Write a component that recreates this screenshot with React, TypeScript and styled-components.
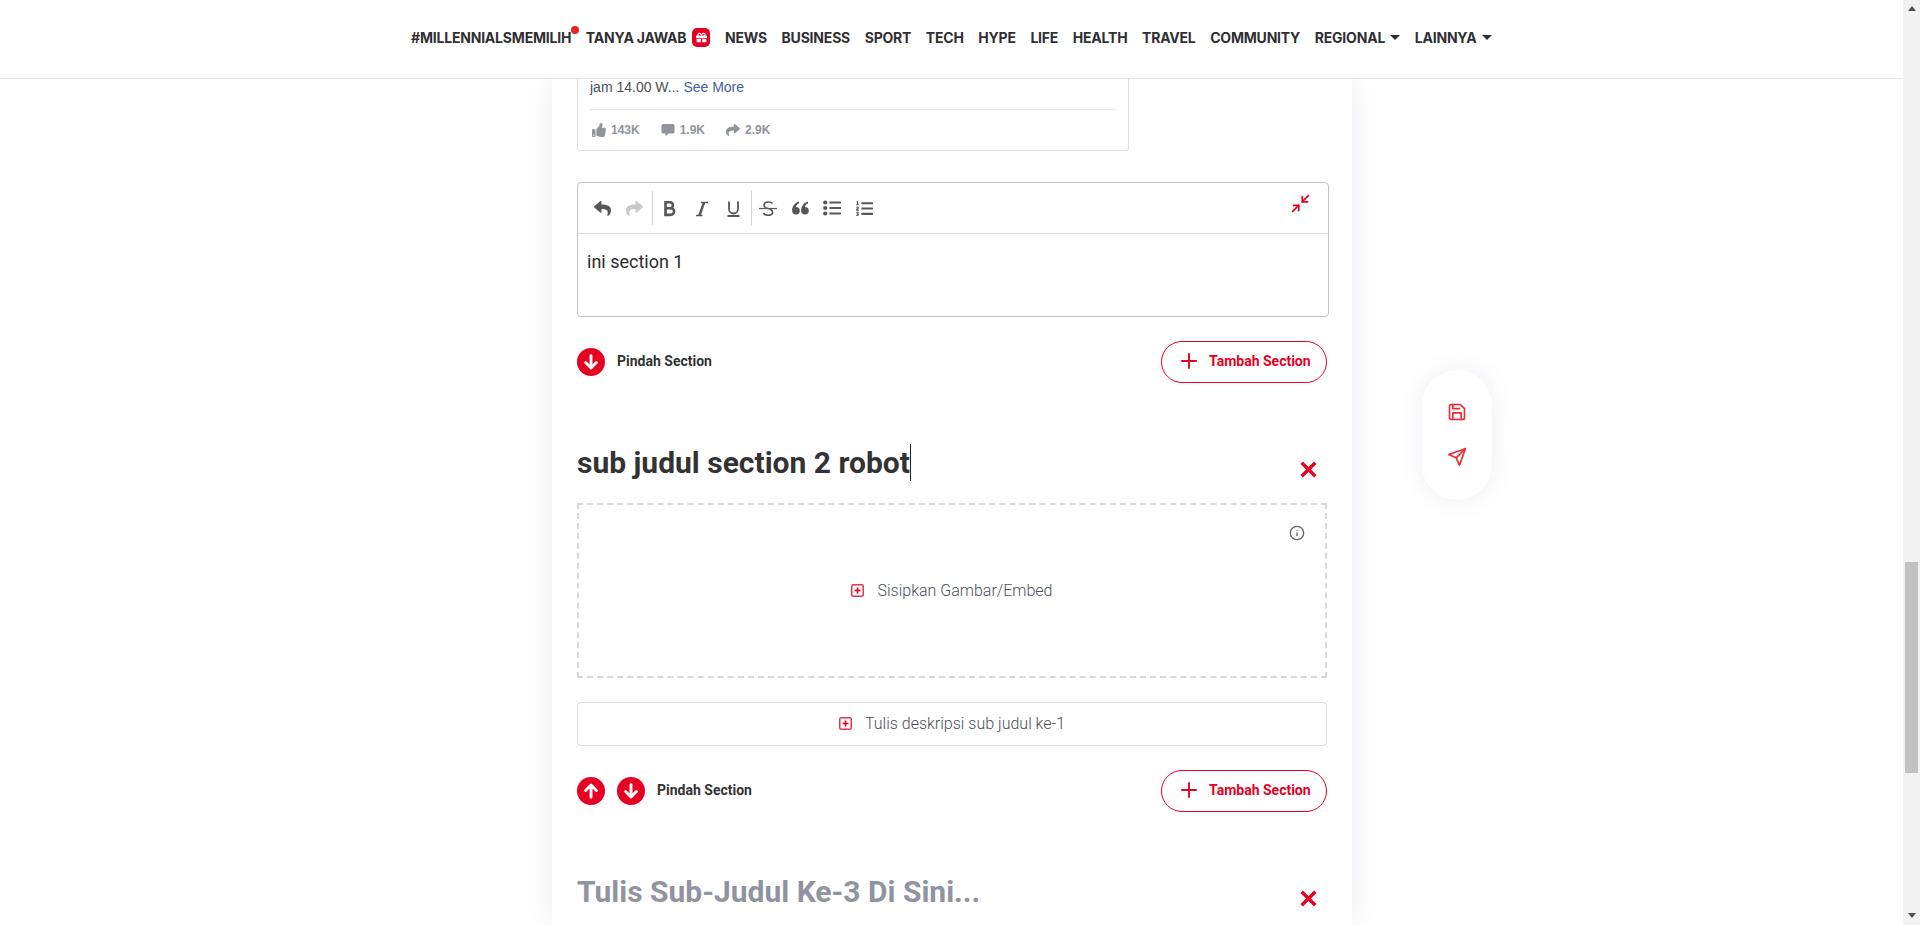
import React from "react";
import styled, { createGlobalStyle } from "styled-components";
import { FaReply, FaShare, FaThumbsUp, FaGift, FaListOl } from "react-icons/fa";
import { FiMinimize2, FiSave, FiSend, FiInfo } from "react-icons/fi";

const RED = "#e60023";

const Global = createGlobalStyle`
  html, body { margin: 0; padding: 0; height: 100%; overflow: hidden; background: #fff; }
  * { box-sizing: border-box; }
  body { font-family: Roboto, "Liberation Sans", sans-serif; color: #333; }
`;

const Shell = styled.div`
  display: flex;
  width: 100%;
  height: 925px;
  overflow: hidden;
`;
const Main = styled.div`
  position: relative;
  flex: 1;
  display: flex;
  flex-direction: column;
  min-width: 0;
`;
const Nav = styled.nav`
  flex: none;
  height: 79px;
  display: flex;
  align-items: center;
  gap: 14.6px;
  padding: 0 0 3px 411px;
  background: #fff;
  border-bottom: 1px solid #e6e6e6;
  position: relative;
  z-index: 2;
`;
const NavLink = styled.span`
  position: relative;
  display: inline-flex;
  align-items: center;
  font-family: Inter, "Liberation Sans", sans-serif;
  font-weight: 700;
  font-size: 14px;
  letter-spacing: -0.2px;
  color: #2f2f33;
  white-space: nowrap;
`;
const Dot = styled.i`
  position: absolute;
  right: -8px;
  top: -3px;
  width: 8px;
  height: 8px;
  border-radius: 50%;
  background: #f02020;
`;
const GiftBadge = styled.span`
  display: inline-flex;
  align-items: center;
  justify-content: center;
  width: 18px;
  height: 19px;
  margin-left: 6px;
  border-radius: 5px;
  background: ${RED};
  color: #fff;
  font-size: 11px;
`;
const Caret = styled.i`
  width: 0;
  height: 0;
  margin-left: 5px;
  border-left: 5px solid transparent;
  border-right: 5px solid transparent;
  border-top: 5px solid #2f2f33;
`;
const Card = styled.main`
  flex: 1;
  width: 800px;
  margin: 0 0 0 552px;
  padding: 0 25px;
  background: #fff;
  box-shadow: 0 0 30px rgba(90, 90, 160, 0.1);
  overflow: hidden;
`;
const Embed = styled.div`
  width: 552px;
  height: 72px;
  padding: 0 12px;
  border: 1px solid #e0e0e0;
  border-top: 0;
  border-radius: 0 0 3px 3px;
  font-family: "Liberation Sans", sans-serif;
`;
const EmbedText = styled.div`
  font-size: 14px;
  line-height: 17px;
  color: #4b4f56;
  height: 31px;
  border-bottom: 1px solid #e9ebee;
  a { color: #3f5f9e; }
`;
const Stats = styled.div`
  display: flex;
  height: 39px;
  align-items: center;
  font-size: 12px;
  font-weight: 700;
  color: #90949c;
`;
const Stat = styled.span`
  display: inline-flex;
  align-items: center;
  gap: 5px;
  margin: 0 19px 0 2px;
  svg { font-size: 14px; }
`;
const Editor = styled.section`
  margin-top: 31px;
  width: 752px;
  height: 135px;
  border: 1px solid #c4c4c4;
  border-radius: 4px;
`;
const Toolbar = styled.div`
  display: flex;
  align-items: center;
  height: 51px;
  padding: 0 17px 0 8px;
  border-bottom: 1px solid #d9d9d9;
`;
const ToolGroup = styled.div<{ $sep?: boolean }>`
  display: flex;
  height: 34px;
  padding-right: ${(p) => (p.$sep ? "2px" : "0")};
  border-right: ${(p) => (p.$sep ? "1px solid #d4d4d4" : "0")};
`;
const ToolButton = styled.span<{ $off?: boolean }>`
  width: 32px;
  display: flex;
  align-items: center;
  justify-content: center;
  font-size: 17px;
  color: ${(p) => (p.$off ? "#c9c9c9" : "#56565c")};
`;
const Compress = styled.span`
  margin-left: auto;
  margin-bottom: 10px;
  display: flex;
  color: ${RED};
  font-size: 21px;
`;
const EditorBody = styled.div`
  padding: 16px 9px;
  font-size: 18px;
  line-height: 24px;
  color: #2b2b2b;
`;
const ActionRow = styled.div`
  margin-top: 24px;
  width: 750px;
  height: 42px;
  display: flex;
  align-items: center;
  gap: 12px;
`;
const RoundArrow = styled.span`
  width: 28px;
  height: 28px;
  border-radius: 50%;
  background: ${RED};
  display: flex;
  align-items: center;
  justify-content: center;
`;
const MoveLabel = styled.span`
  font-size: 14px;
  font-weight: 700;
  color: #333;
  margin-bottom: 3px;
`;
const AddButton = styled.button`
  margin-left: auto;
  width: 166px;
  height: 42px;
  display: flex;
  align-items: center;
  gap: 10px;
  padding: 0 0 2px 17px;
  background: #fff;
  border: 1px solid ${RED};
  border-radius: 21px;
  color: ${RED};
  font-family: inherit;
  font-size: 14px;
  font-weight: 700;
  white-space: nowrap;
`;
const HeadingRow = styled.div`
  margin-top: 61px;
  width: 750px;
  height: 37px;
  display: flex;
  align-items: center;
  justify-content: space-between;
  padding-right: 10px;
`;
const Heading = styled.h2<{ $placeholder?: boolean }>`
  margin: 0;
  font-size: 30px;
  line-height: 37px;
  font-weight: 700;
  color: ${(p) => (p.$placeholder ? "#8f94a0" : "#333")};
  display: flex;
`;
const Cursor = styled.i`
  width: 1px;
  height: 37px;
  background: #222;
`;
const Close = styled.span`
  display: flex;
  margin-top: 14px;
`;
const DropZone = styled.div`
  position: relative;
  margin-top: 22px;
  width: 750px;
  height: 175px;
  padding-bottom: 1px;
  border: 2px dashed #d9d9d9;
  display: flex;
  align-items: center;
  justify-content: center;
  gap: 13px;
  font-size: 16px;
  font-weight: 300;
  color: #4a4f5c;
`;
const InfoIcon = styled.span`
  position: absolute;
  top: 20px;
  right: 20px;
  display: flex;
  color: #666;
  font-size: 16px;
`;
const DescBox = styled.div`
  margin-top: 24px;
  width: 750px;
  height: 44px;
  padding-bottom: 1px;
  border: 1px solid #dcdcdc;
  border-radius: 4px;
  display: flex;
  align-items: center;
  justify-content: center;
  gap: 13px;
  font-size: 16px;
  font-weight: 300;
  color: #4a4f5c;
`;
const FloatBar = styled.aside`
  position: absolute;
  left: 1422px;
  top: 370px;
  width: 70px;
  height: 130px;
  padding-bottom: 2px;
  border-radius: 35px;
  background: #fff;
  box-shadow: 0 0 24px rgba(90, 90, 160, 0.1);
  display: flex;
  flex-direction: column;
  align-items: center;
  justify-content: center;
  gap: 25px;
  color: #ee2a36;
  font-size: 20px;
  svg { display: block; }
  z-index: 1;
`;
const Track = styled.div`
  flex: none;
  width: 17px;
  height: 100%;
  background: #f1f1f1;
  display: flex;
  flex-direction: column;
  align-items: center;
`;
const ArrowUp = styled.i`
  margin-top: 6px;
  border-left: 4px solid transparent;
  border-right: 4px solid transparent;
  border-bottom: 5px solid #505050;
`;
const Thumb = styled.div`
  width: 13px;
  height: 211px;
  margin-top: 551px;
  margin-bottom: auto;
  background: #c1c1c1;
`;
const ArrowDown = styled.i`
  margin-bottom: 7px;
  border-left: 4px solid transparent;
  border-right: 4px solid transparent;
  border-top: 5px solid #505050;
`;

const Arrow = ({ down }: { down?: boolean }) => (
  <svg width="18" height="18" viewBox="0 0 16 16" fill="none" stroke="#fff" strokeWidth="2.6" strokeLinecap="round" strokeLinejoin="round" style={down ? undefined : { transform: "rotate(180deg)" }}>
    <path d="M8 2.5v10.5M3.2 8.5 8 13.3 12.8 8.5" />
  </svg>
);
const Plus = () => (
  <svg width="20" height="20" viewBox="0 0 18 18" fill="none" stroke={RED} strokeWidth="1.7">
    <path d="M9 2v14M2 9h14" />
  </svg>
);
const PlusBox = () => (
  <svg width="13" height="13" viewBox="0 0 13 13" fill="none">
    <rect x="0.75" y="0.75" width="11.5" height="11.5" rx="1.5" stroke="#ea3350" strokeWidth="1.5" />
    <path d="M6.5 3.5v6M3.5 6.5h6" stroke={RED} strokeWidth="1.6" />
  </svg>
);
const Cross = () => (
  <svg width="17" height="17" viewBox="0 0 15 15" fill="none" stroke={RED} strokeWidth="3">
    <path d="M1.5 1.5l12 12M13.5 1.5l-12 12" />
  </svg>
);
const CommentIcon = () => (
  <svg width="14" height="14" viewBox="0 0 14 14" fill="currentColor">
    <path d="M2 1h10a1.5 1.5 0 0 1 1.5 1.5v6.5A1.5 1.5 0 0 1 12 10.500H7.500L4.500 13.500V10.500H2A1.500 1.500 0 0 1 .5 9V2.500A1.500 1.500 0 0 1 2 1z" />
  </svg>
);
const BoldIcon = () => (
  <svg width="17" height="17" viewBox="0 0 17 17" fill="none" stroke="currentColor" strokeWidth="2.6">
    <path d="M4.500 2.300H9a3 3 0 0 1 0 6H4.500zM4.500 8.300h5.300a3.300 3.300 0 0 1 0 6.600H4.500z" />
  </svg>
);
const ItalicIcon = () => (
  <svg width="17" height="17" viewBox="0 0 17 17" fill="none" stroke="currentColor">
    <path d="M8 2.500h7M3 15.500h6.500" strokeWidth="1.3" />
    <path d="M11 2.500 6.500 15.500" strokeWidth="2.4" />
  </svg>
);
const UnderlineIcon = () => (
  <svg width="17" height="17" viewBox="0 0 17 17" fill="none" stroke="currentColor" strokeWidth="1.8">
    <path d="M4 1.500v7.500a4.500 4.500 0 0 0 9 0V1.500M2.500 16h12" />
  </svg>
);
const StrikeIcon = () => (
  <svg width="18" height="17" viewBox="0 0 18 17" fill="none" stroke="currentColor" strokeWidth="1.6">
    <path d="M13.500 3.500C12 1.500 6 1 5 4.500 4.500 7 7 8 9 8.500c3 .7 5 2 4.500 4.500-.8 3-7.500 3-9-.2" />
    <path d="M0 8.500h18" strokeWidth="1.2" />
  </svg>
);
const QuoteIcon = () => (
  <svg width="17" height="14" viewBox="0 0 17 14" fill="currentColor">
    <circle cx="4" cy="9.800" r="3.800" />
    <path d="M.2 9.500C.2 5 3 1.500 7 .5v1.800C4.500 3.500 3.500 6 3.500 8z" />
    <circle cx="13" cy="9.800" r="3.800" />
    <path d="M9.200 9.500C9.200 5 12 1.500 16 .5v1.800C13.500 3.500 12.500 6 12.500 8z" />
  </svg>
);
const BulletIcon = () => (
  <svg width="18" height="16" viewBox="0 0 18 16" fill="currentColor">
    <circle cx="2.200" cy="2.500" r="2.100" />
    <circle cx="2.200" cy="8" r="2.100" />
    <circle cx="2.200" cy="13.500" r="2.100" />
    <rect x="6.500" y="1.500" width="11.500" height="2" />
    <rect x="6.500" y="7" width="11.500" height="2" />
    <rect x="6.500" y="12.500" width="11.500" height="2" />
  </svg>
);

const links = ["NEWS", "BUSINESS", "SPORT", "TECH", "HYPE", "LIFE", "HEALTH", "TRAVEL", "COMMUNITY"];

const MoveRow = ({ up }: { up?: boolean }) => (
  <ActionRow>
    {up && (
      <RoundArrow>
        <Arrow />
      </RoundArrow>
    )}
    <RoundArrow>
      <Arrow down />
    </RoundArrow>
    <MoveLabel>Pindah Section</MoveLabel>
    <AddButton>
      <Plus />
      Tambah Section
    </AddButton>
  </ActionRow>
);

export default function App() {
  return (
    <Shell>
      <Global />
      <Main>
        <Nav>
          <NavLink>
            #MILLENNIALSMEMILIH
            <Dot />
          </NavLink>
          <NavLink>
            TANYA JAWAB
            <GiftBadge>
              <FaGift />
            </GiftBadge>
          </NavLink>
          {links.map((l) => (
            <NavLink key={l}>{l}</NavLink>
          ))}
          <NavLink>
            REGIONAL
            <Caret />
          </NavLink>
          <NavLink>
            LAINNYA
            <Caret />
          </NavLink>
        </Nav>
        <Card>
          <Embed>
            <EmbedText>
              jam 14.00 W... <a>See More</a>
            </EmbedText>
            <Stats>
              <Stat>
                <FaThumbsUp />
                143K
              </Stat>
              <Stat>
                <CommentIcon />
                1.9K
              </Stat>
              <Stat>
                <FaShare />
                2.9K
              </Stat>
            </Stats>
          </Embed>
          <Editor>
            <Toolbar>
              <ToolGroup $sep>
                <ToolButton>
                  <FaReply />
                </ToolButton>
                <ToolButton $off>
                  <FaShare />
                </ToolButton>
              </ToolGroup>
              <ToolGroup $sep>
                <ToolButton>
                  <BoldIcon />
                </ToolButton>
                <ToolButton>
                  <ItalicIcon />
                </ToolButton>
                <ToolButton>
                  <UnderlineIcon />
                </ToolButton>
              </ToolGroup>
              <ToolGroup>
                <ToolButton>
                  <StrikeIcon />
                </ToolButton>
                <ToolButton>
                  <QuoteIcon />
                </ToolButton>
                <ToolButton>
                  <BulletIcon />
                </ToolButton>
                <ToolButton>
                  <FaListOl />
                </ToolButton>
              </ToolGroup>
              <Compress>
                <FiMinimize2 />
              </Compress>
            </Toolbar>
            <EditorBody>ini section 1</EditorBody>
          </Editor>
          <MoveRow />
          <HeadingRow>
            <Heading>
              sub judul section 2 robot
              <Cursor />
            </Heading>
            <Close>
              <Cross />
            </Close>
          </HeadingRow>
          <DropZone>
            <InfoIcon>
              <FiInfo />
            </InfoIcon>
            <PlusBox />
            Sisipkan Gambar/Embed
          </DropZone>
          <DescBox>
            <PlusBox />
            Tulis deskripsi sub judul ke-1
          </DescBox>
          <MoveRow up />
          <HeadingRow>
            <Heading $placeholder>Tulis Sub-Judul Ke-3 Di Sini...</Heading>
            <Close>
              <Cross />
            </Close>
          </HeadingRow>
        </Card>
        <FloatBar>
          <FiSave />
          <FiSend />
        </FloatBar>
      </Main>
      <Track>
        <ArrowUp />
        <Thumb />
        <ArrowDown />
      </Track>
    </Shell>
  );
}
